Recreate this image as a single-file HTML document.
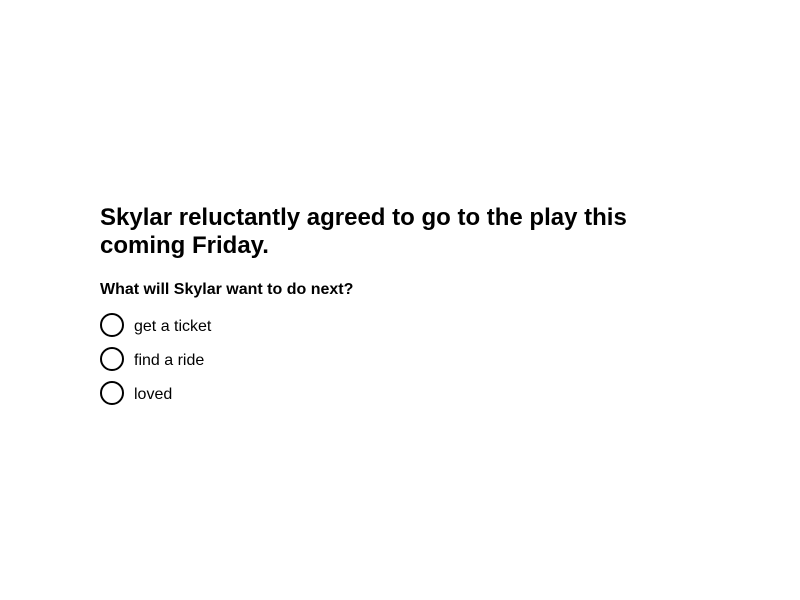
<!DOCTYPE html>
<html><head><style>
body{margin:0;background:#fff;font-family:"Liberation Sans",Arial,sans-serif;color:#000}
h1{position:absolute;left:100px;top:204px;margin:0;font-size:24px;line-height:28px;font-weight:bold;width:560px}
.q{position:absolute;left:100px;top:280px;font-size:16px;font-weight:bold;line-height:19px}
.o{position:absolute;left:100px;height:24px;display:flex;align-items:center;font-size:16px}
.o span.t{position:relative;top:2px}
.o span.c{width:20px;height:20px;border:2px solid #000;border-radius:50%;margin-right:10px;box-sizing:content-box}
</style></head><body>
<h1>Skylar reluctantly agreed to go to the play this coming Friday.</h1>
<div class="q">What will Skylar want to do next?</div>
<div class="o" style="top:313px"><span class="c"></span><span class="t">get a ticket</span></div>
<div class="o" style="top:347px"><span class="c"></span><span class="t">find a ride</span></div>
<div class="o" style="top:381px"><span class="c"></span><span class="t">loved</span></div>
</body></html>
